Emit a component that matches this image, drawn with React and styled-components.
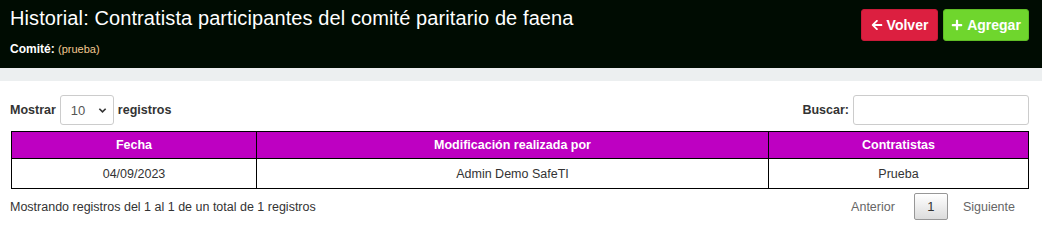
import React from 'react';
import styled, { createGlobalStyle } from 'styled-components';
import { FaArrowLeft, FaPlus } from 'react-icons/fa';

const GlobalStyle = createGlobalStyle`
  body {
    margin: 0;
    background: #fff;
    font-family: "Liberation Sans", Arial, sans-serif;
    color: #333;
  }
`;

const Header = styled.div`
  height: 68px;
  box-sizing: border-box;
  background: #000c02;
  display: flex;
  justify-content: space-between;
  align-items: flex-start;
  padding: 0 13px 0 10px;
`;

const TitleBlock = styled.div`
  display: flex;
  flex-direction: column;
`;

const Title = styled.h1`
  margin: 7px 0 0;
  font-size: 20px;
  letter-spacing: 0.1px;
  font-weight: normal;
  line-height: 22px;
  color: #fff;
`;

const Sub = styled.div`
  margin-top: 13px;
  font-size: 12px;
  font-weight: bold;
  color: #fff;
  span {
    font-weight: normal;
    font-size: 11px;
    color: #f0c890;
  }
`;

const Actions = styled.div`
  display: flex;
  gap: 5px;
  margin-top: 9px;
`;

const Btn = styled.button`
  height: 32px;
  width: ${p => p.$w}px;
  border: 1px solid ${p => p.$border};
  border-radius: 3px;
  background: ${p => p.$bg};
  color: #fff;
  font-family: inherit;
  font-size: 14px;
  font-weight: bold;
  display: flex;
  align-items: center;
  justify-content: center;
  gap: 4px;
  padding: 0;
  svg { width: 12px; height: 12px; }
`;

const Strip = styled.div`
  height: 13px;
  background: #eceff0;
`;

const Content = styled.div`
  padding: 14px 13px 0 11px;
  font-size: 12.5px;
`;

const Controls = styled.div`
  display: flex;
  justify-content: space-between;
  align-items: center;
  height: 30px;
  font-weight: bold;
`;

const Label = styled.label`
  display: flex;
  align-items: center;
  gap: 4px;
  margin-left: -1px;
`;

const SelectBox = styled.div`
  width: 54px;
  height: 30px;
  box-sizing: border-box;
  border: 1px solid #ccc;
  border-radius: 3px;
  display: flex;
  align-items: center;
  justify-content: space-between;
  padding: 0 6px 0 10px;
  font-weight: normal;
  font-size: 13px;
  color: #555;
  svg { width: 9px; height: 9px; }
`;

const Input = styled.div`
  width: 176px;
  height: 30px;
  box-sizing: border-box;
  border: 1px solid #ccc;
  border-radius: 3px;
`;

const Table = styled.table`
  width: 100%;
  margin-top: 6px;
  border-collapse: collapse;
  table-layout: fixed;
`;

const Th = styled.th`
  background: #be00c2;
  color: #fff;
  border: 1px solid #000;
  height: 26px;
  padding: 0;
  font-weight: bold;
  width: ${p => p.$w}px;
`;

const Td = styled.td`
  border: 1px solid #000;
  height: 29px;
  padding: 0;
  text-align: center;
  color: #333;
`;

const Footer = styled.div`
  display: flex;
  justify-content: space-between;
  align-items: center;
  margin-top: 4px;
`;

const Info = styled.div`
  margin-left: -1px;
  color: #333;
`;

const Pager = styled.div`
  display: flex;
  align-items: center;
`;

const PageLink = styled.span`
  color: #666;
  padding: 0 19px 0 0;
  &:last-child { padding: 0 14px 0 15px; }
`;

const PageNum = styled.span`
  width: 34px;
  height: 27px;
  box-sizing: border-box;
  border: 1px solid #979797;
  border-radius: 2px;
  background: linear-gradient(#fff, #dcdcdc);
  display: flex;
  align-items: center;
  justify-content: center;
  color: #333;
  font-size: 13px;
`;

const Chevron = () => (
  <svg viewBox="0 0 10 10"><path d="M1.5 3 L5 6.5 L8.5 3" fill="none" stroke="#333" strokeWidth="1.8" /></svg>
);

export default function App() {
  return (
    <>
      <GlobalStyle />
      <Header>
        <TitleBlock>
          <Title>Historial: Contratista participantes del comité paritario de faena</Title>
          <Sub>Comité: <span>(prueba)</span></Sub>
        </TitleBlock>
        <Actions>
          <Btn $w={77} $bg="#dc1f40" $border="#c81a38"><FaArrowLeft />Volver</Btn>
          <Btn $w={86} $bg="#6fd62d" $border="#5fbd25"><FaPlus />Agregar</Btn>
        </Actions>
      </Header>
      <Strip />
      <Content>
        <Controls>
          <Label>Mostrar <SelectBox>10 <Chevron /></SelectBox> registros</Label>
          <Label>Buscar: <Input /></Label>
        </Controls>
        <Table>
          <thead>
            <tr>
              <Th $w={244}>Fecha</Th>
              <Th $w={511}>Modificación realizada por</Th>
              <Th>Contratistas</Th>
            </tr>
          </thead>
          <tbody>
            <tr>
              <Td>04/09/2023</Td>
              <Td>Admin Demo SafeTI</Td>
              <Td>Prueba</Td>
            </tr>
          </tbody>
        </Table>
        <Footer>
          <Info>Mostrando registros del 1 al 1 de un total de 1 registros</Info>
          <Pager>
            <PageLink>Anterior</PageLink>
            <PageNum>1</PageNum>
            <PageLink>Siguiente</PageLink>
          </Pager>
        </Footer>
      </Content>
    </>
  );
}
